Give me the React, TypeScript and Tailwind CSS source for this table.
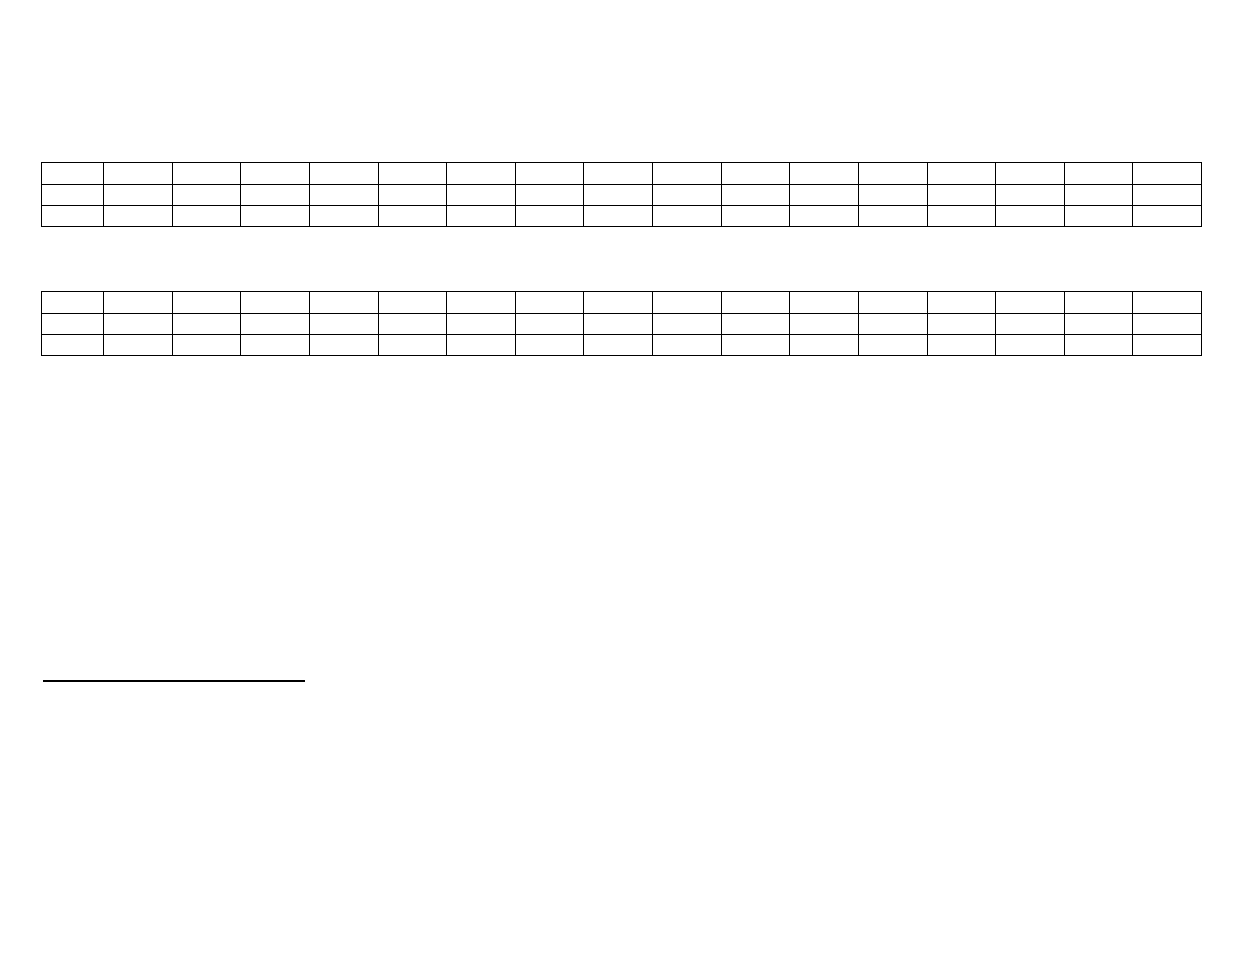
const rowHeights = ["h-[22px]", "h-[21px]", "h-[21px]"];

function EmptyTable({ className }: { className?: string }) {
  return (
    <div
      className={`ml-[41px] grid w-[1161px] grid-cols-[62px_repeat(16,minmax(0,1fr))] border-l border-t border-black ${className ?? ""}`}
    >
      {rowHeights.map((h, r) =>
        Array.from({ length: 17 }).map((_, c) => (
          <div key={`${r}-${c}`} className={`${h} border-b border-r border-black`} />
        ))
      )}
    </div>
  );
}

export default function App() {
  return (
    <div className="min-h-[954px] w-full bg-white pt-[162px] font-['Liberation_Sans',sans-serif]">
      <EmptyTable />
      <EmptyTable className="mt-[64px]" />
      <div className="ml-[43px] mt-[324px] h-[2px] w-[262px] bg-black" />
    </div>
  );
}
